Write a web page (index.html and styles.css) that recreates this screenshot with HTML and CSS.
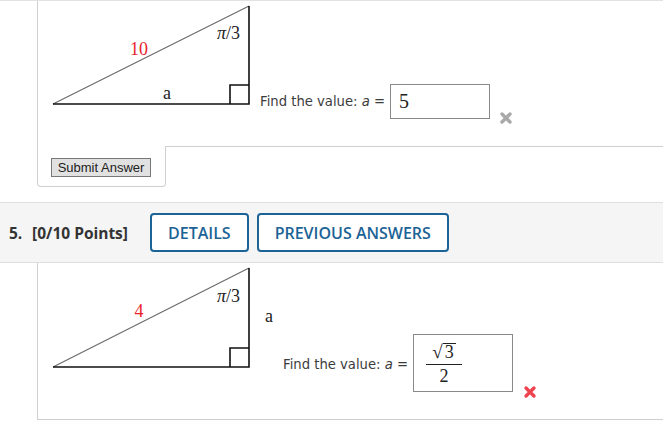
FILE: index.html
```html
<!DOCTYPE html>
<html>
<head>
<meta charset="utf-8">
<link rel="stylesheet" href="styles.css">
</head>
<body>
<div class="q-prev">
  <div class="q-body q-body-top">
    <div class="q-row">
      <svg class="diagram" width="222" height="145" viewBox="0 0 222 145">
        <line x1="15" y1="103" x2="211" y2="5" class="hyp"/>
        <polyline points="15,103 211,103 211,5" class="leg"/>
        <polyline points="192,103 192,84 211,84" class="leg"/>
        <text x="101" y="54" text-anchor="middle" class="lbl red">10</text>
        <text x="179" y="38" class="lbl"><tspan font-style="italic">π</tspan>/3</text>
        <text x="125" y="98" class="lbl">a</text>
      </svg>
      <span class="find find-1">Find the value: <i>a</i> =</span>
      <div class="answer answer-1"><span class="ans-num">5</span></div>
      <svg class="mark mark-1" width="14" height="14" viewBox="0 0 14 14"><path d="M3 3 L11 11 M11 3 L3 11" class="x-gray"/></svg>
    </div>
  </div>
  <div class="submit-row">
    <div class="submit-tab"><button class="submit">Submit Answer</button></div>
    <div class="submit-rest"></div>
  </div>
</div>

<div class="q-head">
  <span class="q-num">5.</span>
  <span class="q-pts">[0/10 Points]</span>
  <button class="q-btn">DETAILS</button>
  <button class="q-btn">PREVIOUS ANSWERS</button>
</div>

<div class="q-body q-body-5">
  <div class="q-row">
    <svg class="diagram" width="240" height="150" viewBox="0 0 240 150">
      <line x1="15" y1="104" x2="211" y2="5" class="hyp"/>
      <polyline points="15,104 211,104 211,5" class="leg"/>
      <polyline points="192,104 192,85 211,85" class="leg"/>
      <text x="101" y="54" text-anchor="middle" class="lbl red">4</text>
      <text x="179" y="39" class="lbl"><tspan font-style="italic">π</tspan>/3</text>
      <text x="227" y="59" class="lbl">a</text>
    </svg>
    <span class="find find-2">Find the value: <i>a</i> =</span>
    <div class="answer answer-2">
      <span class="frac">
        <span class="frac-top"><span class="rad">√</span><span class="radicand">3</span></span>
        <span class="frac-bot">2</span>
      </span>
    </div>
    <svg class="mark mark-2" width="14" height="14" viewBox="0 0 14 14"><path d="M3 3 L11 11 M11 3 L3 11" class="x-red"/></svg>
  </div>
</div>
</body>
</html>
```
FILE: styles.css
```css
* { box-sizing: border-box; }
html, body { margin: 0; padding: 0; background: #fff; }
body { width: 663px; height: 423px; overflow: hidden; font-family: "DejaVu Sans", Verdana, sans-serif; }

.q-prev { border-top: 1px solid #e2e2e2; }

.q-body {
  margin-left: 37px;
  border-left: 1px solid #cfcfcf;
}
.q-body-top { height: 145px; }
.q-body-5 { height: 157px; border-bottom: 1px solid #cfcfcf; }

.q-row { display: flex; align-items: flex-start; }

.diagram { display: block; flex: none; }
.hyp { stroke: #6a6a6a; stroke-width: 1.1; }
.leg { fill: none; stroke: #111; stroke-width: 1.6; }
.lbl { font-family: "Liberation Serif", "DejaVu Serif", serif; font-size: 18px; fill: #222; }
.red { fill: #e8232b; }

.find {
  flex: none;
  width: 130px;
  font-size: 13.2px;
  line-height: 16px;
  color: #3c3c3c;
  white-space: nowrap;
}
.find i { font-style: italic; }
.find-1 { margin-top: 93px; }
.find-2 { margin-top: 94px; margin-left: 5px; }

.answer {
  flex: none;
  border: 1px solid #8a8a8a;
  width: 100px;
  background: #fff;
  font-family: "Liberation Serif", "DejaVu Serif", serif;
  color: #222;
}
.answer-1 { height: 35px; margin-top: 83px; padding: 5px 0 0 8px; }
.ans-num { font-size: 20px; line-height: 22px; }
.answer-2 { height: 58px; margin-top: 71px; padding: 7px 0 0 12px; }

.frac { display: inline-flex; flex-direction: column; align-items: center; width: 36px; }
.frac-top { display: flex; align-items: flex-start; font-size: 18px; line-height: 20px; padding-bottom: 2px; border-bottom: 1px solid #222; width: 100%; justify-content: center; }
.rad { font-size: 19px; line-height: 20px; }
.radicand { border-top: 1px solid #222; line-height: 17px; padding: 0 2px; margin-top: 1px; }
.frac-bot { font-size: 18px; line-height: 20px; margin-top: 1px; }

.mark { display: block; flex: none; }
.mark-1 { margin-top: 110px; margin-left: 9px; }
.mark-2 { margin-top: 122px; margin-left: 10px; }
.x-gray { stroke: #a9a9a9; stroke-width: 3.4; stroke-linecap: round; fill: none; }
.x-red { stroke: #ef4450; stroke-width: 3.4; stroke-linecap: round; fill: none; }

.submit-row { display: flex; }
.submit-tab {
  margin-left: 37px;
  width: 129px;
  height: 41px;
  border-left: 1px solid #cfcfcf;
  border-right: 1px solid #cfcfcf;
  border-bottom: 1px solid #cfcfcf;
  border-radius: 0 0 4px 4px;
  padding: 12px 0 0 13px;
}
.submit-rest { flex: 1; border-top: 1px solid #cfcfcf; }
.submit {
  display: block;
  width: 100px;
  height: 19px;
  padding: 0;
  font-family: "Liberation Sans", Arial, sans-serif;
  font-size: 13px;
  color: #222;
  background: #e1e1e1;
  border: 1px solid #777;
  border-radius: 0;
}

.q-head {
  margin-top: 15px;
  height: 61px;
  border-top: 1px solid #dedede;
  border-bottom: 1px solid #dedede;
  background: #f5f5f5;
  display: flex;
  align-items: center;
  padding-left: 9px;
  font-family: "Open Sans", sans-serif;
  color: #333;
}
.q-num { font-weight: 700; font-size: 15.5px; width: 23px; }
.q-pts { font-weight: 700; font-size: 15.5px; margin-right: 22px; }
.q-btn {
  height: 39px;
  margin-right: 8px;
  padding: 0 16px;
  background: #fff;
  border: 2px solid #1c6396;
  border-radius: 4px;
  color: #1c6396;
  font-family: "Open Sans", sans-serif;
  font-size: 16px;
  font-weight: 600;
}
```
